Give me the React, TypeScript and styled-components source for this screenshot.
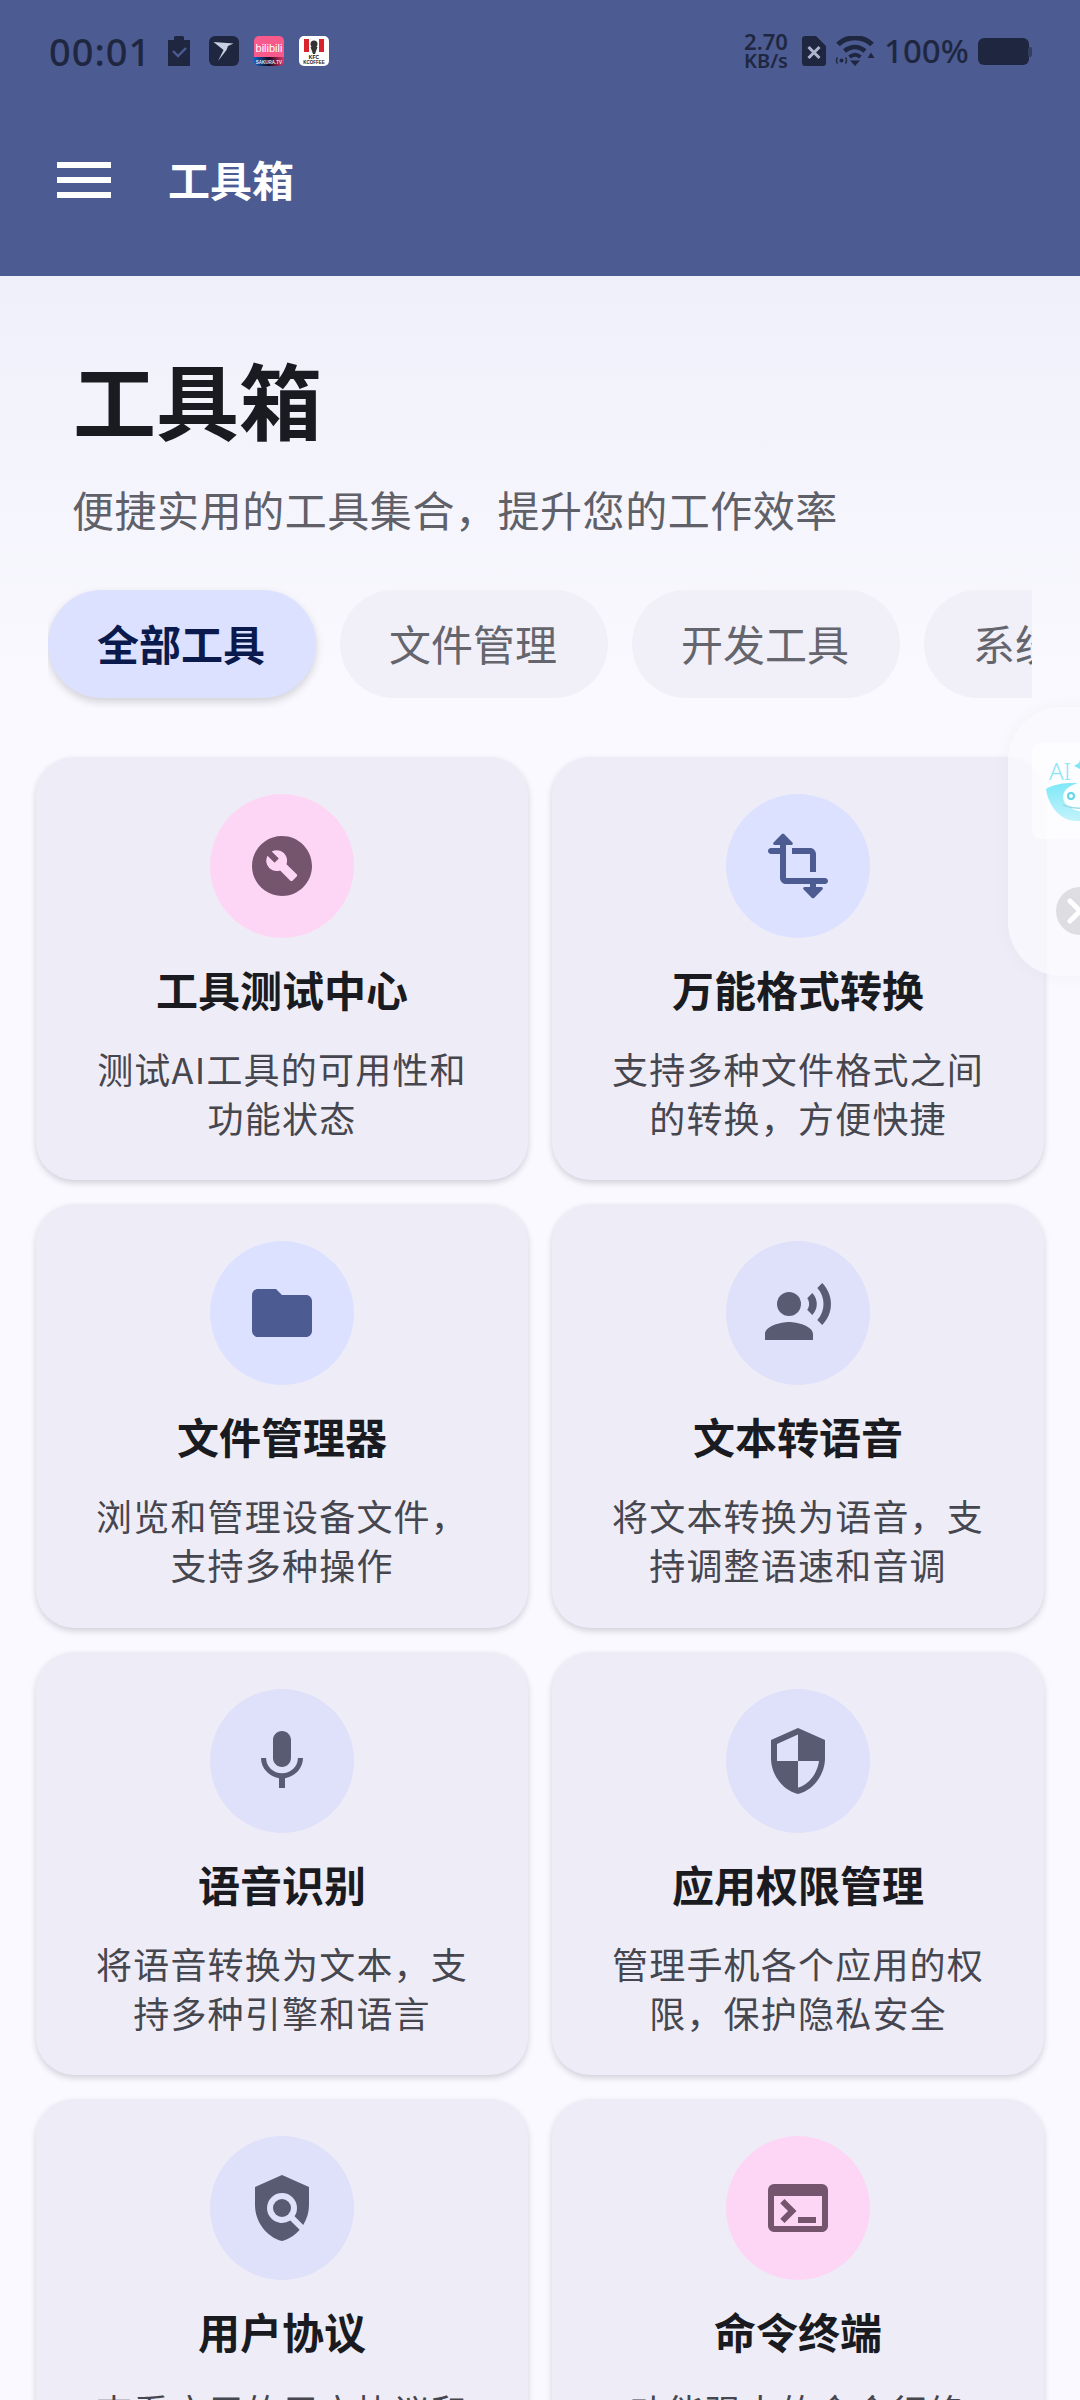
import React from "react";
import styled, { createGlobalStyle } from "styled-components";
import {
  MdMenu,
  MdBuildCircle,
  MdFolder,
  MdRecordVoiceOver,
  MdMic,
  MdSecurity,
  MdPolicy,
  MdTerminal,
} from "react-icons/md";

const CJK = `"Noto Sans CJK SC", "Noto Sans", sans-serif`;
const DARK = "#1f2740";

const Global = createGlobalStyle`
  html, body { margin: 0; padding: 0; background: #faf9ff; }
  body { font-family: ${CJK}; overflow: hidden; }
`;

const Page = styled.div`
  position: relative;
  width: 1080px;
  height: 2400px;
  overflow: hidden;
  background: linear-gradient(180deg, #f0f0fa 276px, #faf9ff 700px);
`;

const Header = styled.header`
  height: 276px;
  background: #4c5b92;
  display: flex;
  flex-direction: column;
`;

const StatusBar = styled.div`
  height: 96px;
  padding: 30px 48px 0 49px;
  box-sizing: border-box;
  display: flex;
  justify-content: space-between;
  align-items: flex-start;
  color: ${DARK};
  font-family: "Noto Sans", sans-serif;
`;

const StatusGroup = styled.div`
  height: 42px;
  display: flex;
  align-items: center;
`;

const Time = styled.span`
  font-size: 38px;
  font-weight: 500;
  letter-spacing: 1px;
  width: 115px;
  line-height: 42px;
`;

const StatusIcon = styled.svg<{ $gap?: number }>`
  display: block;
  flex: none;
  margin-left: ${(p) => p.$gap ?? 0}px;
`;

const Speed = styled.div`
  width: 46px;
  display: flex;
  flex-direction: column;
  align-items: center;
  font-size: 22px;
  font-weight: 600;
  line-height: 19px;
`;

const SpeedUnit = styled.span`
  font-size: 20px;
`;

const Percent = styled.span`
  margin-left: 9px;
  font-size: 33px;
  font-weight: 500;
  line-height: 42px;
  width: 84px;
  white-space: nowrap;
`;

const Toolbar = styled.div`
  height: 168px;
  padding-left: 48px;
  display: flex;
  align-items: center;
  gap: 48px;
  color: #fff;
`;

const ToolbarTitle = styled.h2`
  margin: 0 0 4px;
  font-size: 42px;
  font-weight: 700;
`;

const Title = styled.h1`
  margin: 72px 0 0 73px;
  font-size: 83px;
  line-height: 100px;
  font-weight: 700;
  color: #1a1b21;
`;

const Subtitle = styled.p`
  margin: 31px 0 0 72px;
  font-size: 42px;
  line-height: 60px;
  letter-spacing: 0.55px;
  color: #5f6068;
`;

const Chips = styled.div`
  margin: 41px 48px 49px;
  padding: 10px 0;
  display: flex;
  gap: 24px;
  overflow: hidden;
`;

const Chip = styled.div<{ $active?: boolean }>`
  flex: 0 0 268px;
  height: 108px;
  padding: 0 2px 3px 0;
  box-sizing: border-box;
  border-radius: 54px;
  display: flex;
  align-items: center;
  justify-content: center;
  font-size: 42px;
  font-weight: ${(p) => (p.$active ? 700 : 400)};
  color: ${(p) => (p.$active ? "#0b1a4d" : "#65656d")};
  background: ${(p) => (p.$active ? "#dce1ff" : "#f1f0f9")};
  box-shadow: ${(p) => (p.$active ? "0 4px 8px rgba(0,0,0,0.16)" : "none")};
`;

const Grid = styled.div`
  padding: 0 36px;
  display: grid;
  grid-template-columns: 492px 492px;
  gap: 24px;
`;

const Card = styled.article`
  height: 423.33px;
  box-sizing: border-box;
  padding-top: 37px;
  border-radius: 38px;
  background: #eeedf7;
  box-shadow: 0 3px 6px rgba(30, 30, 50, 0.18);
  display: flex;
  flex-direction: column;
  align-items: center;
`;

const tones = {
  primary: { bg: "#dce1ff", fg: "#4c5b92" },
  secondary: { bg: "#dfe0f9", fg: "#585b71" },
  tertiary: { bg: "#fdd6f5", fg: "#75546e" },
};

type Tone = keyof typeof tones;

const IconCircle = styled.div<{ $tone: Tone }>`
  width: 144px;
  height: 144px;
  flex: none;
  border-radius: 50%;
  display: flex;
  align-items: center;
  justify-content: center;
  background: ${(p) => tones[p.$tone].bg};
  color: ${(p) => tones[p.$tone].fg};
`;

const CardTitle = styled.h3`
  margin: 26px 0 0;
  font-size: 42px;
  line-height: 50px;
  font-weight: 700;
  color: #1a1b21;
`;

const CardDesc = styled.p`
  margin: 30px 0 0;
  width: 396px;
  font-size: 36px;
  line-height: 49px;
  letter-spacing: 1.2px;
  text-align: center;
  color: #46464f;
`;

const FloatPanel = styled.aside`
  position: absolute;
  left: 1008px;
  top: 707px;
  width: 130px;
  height: 269px;
  border-radius: 54px;
  background: rgba(249, 249, 254, 0.72);
  box-shadow: 0 0 18px rgba(40, 40, 70, 0.04);
  display: flex;
  flex-direction: column;
  align-items: flex-start;
  padding: 36px 0 0 24px;
  box-sizing: border-box;
`;

const LogoTile = styled.div`
  width: 106px;
  height: 96px;
  border-radius: 8px;
  background: rgba(255, 255, 255, 0.6);
`;

const CloseDot = styled.div`
  margin: 48px 0 0 24px;
  width: 48px;
  height: 48px;
  border-radius: 50%;
  background: #dedee2;
  color: #fff;
  display: flex;
  align-items: center;
  justify-content: center;
`;

type IconProps = { size?: number };

function TransformRounded({ size = 72 }: IconProps) {
  return (
    <svg width={size} height={size} viewBox="0 0 24 24" fill="currentColor">
      <path d="M21 16H8V5h1.790c.45 0 .67-.54.35-.85L7.350 1.360c-.2-.2-.51-.2-.71 0L3.850 4.150c-.31.31-.09.85.36.85H6v1H3c-.55 0-1 .45-1 1s.45 1 1 1h3v8c0 1.100.9 2 2 2h8v1h-1.790c-.45 0-.67.54-.35.85l2.790 2.790c.2.2.51.2.71 0l2.790-2.790c.31-.31.09-.85-.35-.85H18v-1h3c.55 0 1-.45 1-1s-.45-1-1-1z" />
      <path d="M18 14V8c0-1.100-.9-2-2-2h-6v2h6v6h2z" />
    </svg>
  );
}

const tools: { title: string; desc: string; tone: Tone; Icon: React.ComponentType<IconProps> }[] = [
  { title: "工具测试中心", desc: "测试AI工具的可用性和功能状态", tone: "tertiary", Icon: MdBuildCircle },
  { title: "万能格式转换", desc: "支持多种文件格式之间的转换，方便快捷", tone: "primary", Icon: TransformRounded },
  { title: "文件管理器", desc: "浏览和管理设备文件，支持多种操作", tone: "primary", Icon: MdFolder },
  { title: "文本转语音", desc: "将文本转换为语音，支持调整语速和音调", tone: "secondary", Icon: MdRecordVoiceOver },
  { title: "语音识别", desc: "将语音转换为文本，支持多种引擎和语言", tone: "secondary", Icon: MdMic },
  { title: "应用权限管理", desc: "管理手机各个应用的权限，保护隐私安全", tone: "secondary", Icon: MdSecurity },
  { title: "用户协议", desc: "查看应用的用户协议和", tone: "secondary", Icon: MdPolicy },
  { title: "命令终端", desc: "功能强大的命令行终", tone: "tertiary", Icon: MdTerminal },
];

const chips = ["全部工具", "文件管理", "开发工具", "系统工具"];

function LeftStatusIcons() {
  return (
    <>
      <StatusIcon width="30" height="30" viewBox="0 0 30 30">
        <path d="M4 4h6V1.500A1.500 1.500 0 0 1 11.500 0h7A1.500 1.500 0 0 1 20 1.500V4h6v26H4z" fill={DARK} />
        <path d="M9 15l5 5 8-8" fill="none" stroke="#4c5b92" strokeWidth="2.400" />
      </StatusIcon>
      <StatusIcon $gap={15} width="30" height="30" viewBox="0 0 30 30">
        <rect width="30" height="30" rx="6" fill={DARK} />
        <path d="M4.500 6 24.500 7.500 19 10 17.500 14 9 25 14.500 14z" fill="#c9d0e2" />
      </StatusIcon>
      <StatusIcon $gap={15} width="30" height="30" viewBox="0 0 30 30">
        <defs>
          <clipPath id="biliClip">
            <rect width="30" height="30" rx="5" />
          </clipPath>
          <linearGradient id="biliStrip" x1="0" x2="1" y1="0" y2="0">
            <stop offset="0" stopColor="#0c62c8" />
            <stop offset="0.5" stopColor="#14081c" />
            <stop offset="1" stopColor="#e8346c" />
          </linearGradient>
        </defs>
        <g clipPath="url(#biliClip)">
          <rect width="30" height="21" fill="#f85a8c" />
          <rect y="21" width="30" height="9" fill="url(#biliStrip)" />
          <text x="15" y="16" textAnchor="middle" fontSize="11" fontWeight="400" fill="#fff" fontFamily="Liberation Sans, sans-serif">
            bilibili
          </text>
          <text x="15" y="27.500" textAnchor="middle" fontSize="4.500" fontWeight="700" fill="#e6e6f0" fontFamily="Liberation Sans, sans-serif">
            SAKURA.TV
          </text>
        </g>
      </StatusIcon>
      <StatusIcon $gap={15} width="30" height="30" viewBox="0 0 30 30">
        <rect width="30" height="30" rx="5" fill="#fff" />
        <rect x="5" y="3" width="20" height="13" fill="#d8242c" />
        <rect x="10" y="3" width="10" height="13" fill="#fff" />
        <circle cx="15" cy="8" r="3.500" fill="#333" />
        <path d="M11.500 11h7l-2.500 7h-2z" fill="#333" />
        <text x="15" y="23" textAnchor="middle" fontSize="5" fontWeight="700" fill="#111" fontFamily="Liberation Sans, sans-serif">
          KFC
        </text>
        <text x="15" y="28" textAnchor="middle" fontSize="4.500" fontWeight="700" fill="#222" fontFamily="Liberation Sans, sans-serif">
          KCOFFEE
        </text>
      </StatusIcon>
    </>
  );
}

function RightStatusIcons() {
  return (
    <>
      <Speed>
        <span>2.70</span>
        <SpeedUnit>KB/s</SpeedUnit>
      </Speed>
      <StatusIcon $gap={13} width="24" height="30" viewBox="0 0 24 30">
        <path d="M3 0h11l10 10v17a3 3 0 0 1-3 3H3a3 3 0 0 1-3-3V3a3 3 0 0 1 3-3z" fill={DARK} />
        <path d="M6.500 11l11 11M17.500 11l-11 11" stroke="#aeb6cf" strokeWidth="3" fill="none" />
      </StatusIcon>
      <StatusIcon $gap={9} width="40" height="30" viewBox="0 0 40 30">
        <path d="M3 8.500C12-.5 28-.5 37 8.500" fill="none" stroke={DARK} strokeWidth="5" />
        <path d="M9.500 15c6.500-5.500 14.500-5.500 20.500 0" fill="none" stroke={DARK} strokeWidth="4.500" />
        <path d="M14.500 21c3.800-3 7.500-3 11 0" fill="none" stroke={DARK} strokeWidth="3.800" />
        <path d="M15 24.500h10l-5 5.500z" fill={DARK} />
        <path d="M36 16.500l3.500 5.500h-7z" fill={DARK} />
        <circle cx="6.500" cy="24.500" r="2" fill={DARK} />
        <path d="M2.500 21.500c-1.300 2-1.300 4.200 0 6M10.500 21.500c1.300 2 1.300 4.200 0 6" fill="none" stroke={DARK} strokeWidth="1.400" />
      </StatusIcon>
      <Percent>100%</Percent>
      <StatusIcon $gap={10} width="54" height="27" viewBox="0 0 54 27">
        <rect width="51" height="27" rx="6" fill={DARK} />
        <rect x="50" y="9" width="4" height="10" rx="2" fill="#333d5e" />
      </StatusIcon>
    </>
  );
}

function AiLogo() {
  return (
    <svg width="60" height="96" viewBox="0 0 60 96" style={{ display: "block" }}>
      <defs>
        <linearGradient id="aiHead" x1="0" x2="0" y1="0" y2="1">
          <stop offset="0" stopColor="#7fe8f8" />
          <stop offset="1" stopColor="#c2f3fb" />
        </linearGradient>
      </defs>
      <text x="17" y="37" fontSize="24" fontWeight="300" fill="#88e8f6" fontFamily="Noto Sans, sans-serif">
        AI
      </text>
      <path d="M42 23l5-3 1-3 12 1v12l-10-1-2-3z" fill="#7fe6f5" />
      <path d="M14 46c8-5 18-6 26-6h20v38H44C28 78 16 62 14 46z" fill="url(#aiHead)" />
      <ellipse cx="54" cy="54" rx="23" ry="15" fill="#fbfeff" />
      <circle cx="39" cy="53" r="3" fill="none" stroke="#5fd5e8" strokeWidth="2" />
      <path d="M31 62c10 4 20 4 29 1" fill="none" stroke="#9adbe6" strokeWidth="1.500" />
    </svg>
  );
}

export default function App() {
  return (
    <Page>
      <Global />
      <Header>
        <StatusBar>
          <StatusGroup>
            <Time>00:01</Time>
            <LeftStatusIcons />
          </StatusGroup>
          <StatusGroup>
            <RightStatusIcons />
          </StatusGroup>
        </StatusBar>
        <Toolbar>
          <MdMenu size={72} />
          <ToolbarTitle>工具箱</ToolbarTitle>
        </Toolbar>
      </Header>
      <main>
        <Title>工具箱</Title>
        <Subtitle>便捷实用的工具集合，提升您的工作效率</Subtitle>
        <Chips>
          {chips.map((c, i) => (
            <Chip key={c} $active={i === 0}>
              {c}
            </Chip>
          ))}
        </Chips>
        <Grid>
          {tools.map(({ title, desc, tone, Icon }) => (
            <Card key={title}>
              <IconCircle $tone={tone}>
                <Icon size={72} />
              </IconCircle>
              <CardTitle>{title}</CardTitle>
              <CardDesc>{desc}</CardDesc>
            </Card>
          ))}
        </Grid>
      </main>
      <FloatPanel>
        <LogoTile>
          <AiLogo />
        </LogoTile>
        <CloseDot>
          <svg width="28" height="28" viewBox="0 0 28 28">
            <path d="M4 4l20 20M24 4L4 24" stroke="currentColor" strokeWidth="5" strokeLinecap="round" />
          </svg>
        </CloseDot>
      </FloatPanel>
    </Page>
  );
}
